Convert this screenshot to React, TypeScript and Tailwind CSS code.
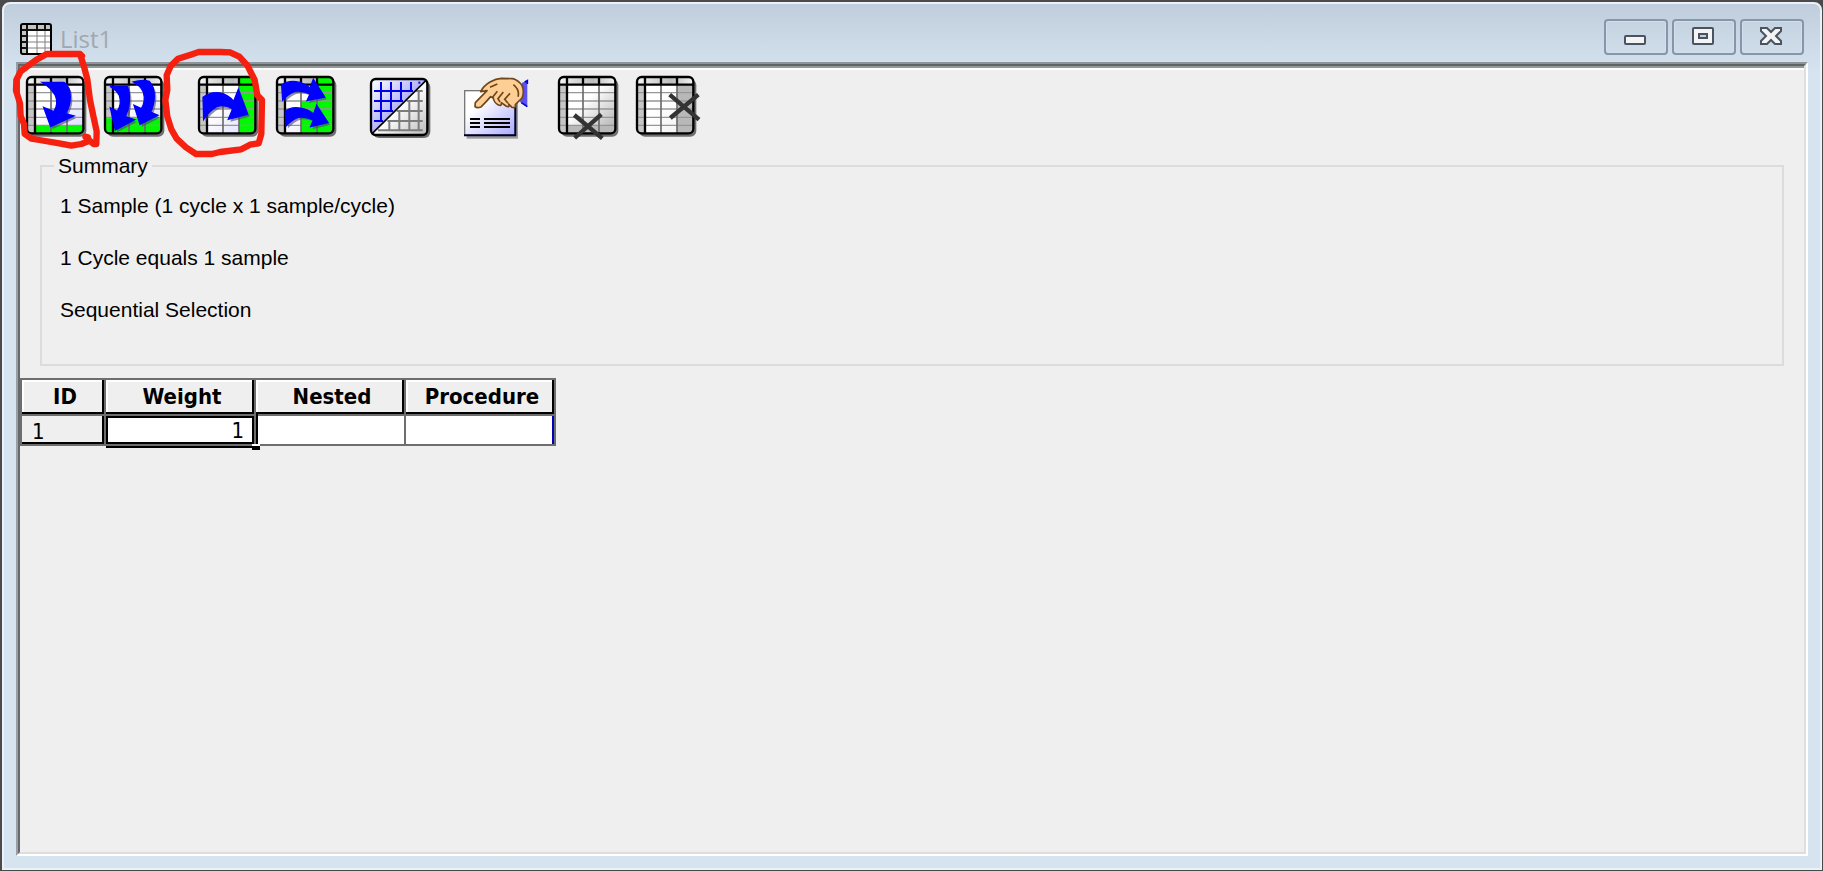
/**
 * Weighted list window: toolbar, summary box and the list grid
 */
import type { ReactNode } from "react";

interface GridIconProps {
  id: string;
  shade?: string;
  green?: string;
  gray?: string;
  arrows?: string[];
  cross?: string;
}

/** Table sheet with optional filled cells, arrows and a cross */
function GridIcon({ id, shade = "#d9d9ff", green, gray, arrows = [], cross }: GridIconProps) {
  return (
    <svg viewBox="0 0 186 186" className="block h-[62px] w-[62px] overflow-visible" aria-hidden="true">
      <defs>
        <linearGradient id={`${id}-body`} x1="0" y1="0" x2="1" y2="1">
          <stop offset="0.45" stopColor="#ffffff" />
          <stop offset="1" stopColor={shade} />
        </linearGradient>
        <linearGradient id={`${id}-head`}>
          <stop offset="0" stopColor="#f4f4f4" />
          <stop offset="0.6" stopColor="#bcbcbc" />
          <stop offset="1" stopColor="#f4f4f4" />
        </linearGradient>
        <clipPath id={`${id}-clip`}>
          <rect x="3" y="3" width="169" height="169" rx="14" />
        </clipPath>
      </defs>
      <rect x="9" y="10" width="172" height="172" rx="18" fill="#444444" opacity="0.75" />
      <g clipPath={`url(#${id}-clip)`}>
        <rect x="3" y="3" width="170" height="170" fill={`url(#${id}-body)`} />
        <rect x="3" y="3" width="170" height="22" fill={`url(#${id}-head)`} />
        <rect x="3" y="25" width="24" height="148" fill="#c6c6c6" />
        {gray && <path d={gray} fill="#b8b8b8" />}
        {green && <path d={green} fill="#00f800" />}
        <path d="M3 50H173M3 75H173M3 99H173M3 124H173M3 148H173" stroke="#969696" strokeWidth="4" />
        <path d="M75 27V173M123 27V173" stroke="#6c6c6c" strokeWidth="5" />
        <path d="M3 26H173M27 3V173M75 3V25M123 3V25" stroke="#000000" strokeWidth="7" />
      </g>
      <rect x="3" y="3" width="169" height="169" rx="14" fill="none" stroke="#000000" strokeWidth="7" />
      {arrows.map((d) => (
        <g key={d}>
          <path d={d} fill="#44446a" opacity="0.6" transform="translate(6 7)" />
          <path d={d} fill="#0000ff" stroke="#0000ff" strokeWidth="4" />
        </g>
      ))}
      {cross && <path d={cross} fill="none" stroke="#333333" strokeWidth="13" />}
    </svg>
  );
}

function TransposeIcon() {
  return (
    <svg viewBox="0 0 186 186" className="block h-[62px] w-[62px] overflow-visible" aria-hidden="true">
      <defs>
        <linearGradient id="tr-blue" x1="0" y1="0" x2="1" y2="1">
          <stop offset="0" stopColor="#ffffff" />
          <stop offset="0.5" stopColor="#b4b4ff" />
        </linearGradient>
        <linearGradient id="tr-gray" x1="0" y1="0" x2="1" y2="1">
          <stop offset="0.5" stopColor="#ffffff" />
          <stop offset="1" stopColor="#bbbbbb" />
        </linearGradient>
      </defs>
      <rect x="9" y="15" width="172" height="171" rx="18" fill="#444444" opacity="0.75" />
      <rect x="3" y="9" width="169" height="168" rx="14" fill="url(#tr-gray)" />
      <path d="M5 172V24Q5 11 18 11H166Z" fill="url(#tr-blue)" />
      <path d="M12 45H129M12 75H99M12 105H69M12 135H39M33 18V138M63 18V108M93 18V78M123 18V48" stroke="#0000e6" strokeWidth="6" />
      <path d="M145 20H151" stroke="#0000e6" strokeWidth="6" />
      <path d="M138 45H158M110 75H158M80 105H158M52 135H158M24 163H158M58 132V163M88 102V163M118 72V163M146 42V163" stroke="#7c7c7c" strokeWidth="6" />
      <path d="M7 172L168 13" stroke="#000000" strokeWidth="5" />
      <rect x="3" y="9" width="169" height="168" rx="14" fill="none" stroke="#000000" strokeWidth="7" />
    </svg>
  );
}

function PropertiesIcon() {
  return (
    <svg viewBox="0 0 186 186" className="block h-[62px] w-[62px] overflow-visible" aria-hidden="true">
      <defs>
        <linearGradient id="pr-card" x1="0" y1="0" x2="1" y2="1">
          <stop offset="0.3" stopColor="#ffffff" />
          <stop offset="1" stopColor="#a8a8ff" />
        </linearGradient>
      </defs>
      <rect x="8" y="50" width="154" height="138" fill="#777777" opacity="0.7" />
      <rect x="2" y="44" width="152" height="134" fill="url(#pr-card)" stroke="#777777" strokeWidth="4" />
      <path d="M0 178H156M154 86V180" stroke="#00002a" strokeWidth="6" />
      <path d="M18 129H48M18 141H48M18 153H48M60 129H138M60 141H138M60 153H138" stroke="#000000" strokeWidth="6" />
      <path d="M174 20L190 14V92L168 78Z" fill="#5b50f0" />
      <path d="M182 18L190 14V24M172 80L190 92" stroke="#0000d0" strokeWidth="5" fill="none" />
      <path
        d="M34 80L69 44Q60 46 50 47Q58 30 78 18Q96 8 112 7L146 8Q162 12 174 28Q182 48 174 66Q164 76 154 86Q156 98 144 94L134 84Q138 96 126 90L112 80Q114 92 102 86Q90 80 88 66L80 62Q68 76 52 92Q40 98 33 92Z"
        fill="#fdcf94"
        stroke="#70461a"
        strokeWidth="5"
        strokeLinejoin="round"
      />
      <path d="M84 66L100 46M108 78L102 68L118 48M132 82L122 70L138 52M78 34L100 24M148 26Q168 42 162 62" fill="none" stroke="#70461a" strokeWidth="5" />
    </svg>
  );
}

/** Toolbar groups, left to right */
const TOOL_GROUPS: { label: string; icon: ReactNode }[][] = [
  [
    {
      label: "Append level",
      icon: (
        <GridIcon
          id="append"
          green="M27 150H173V173H27Z"
          arrows={["M49 19H114Q133 32 133 62Q133 92 118 113L144 120L74 152L53 94L84 107Q98 84 88 58Q74 34 49 19Z"]}
        />
      ),
    },
    {
      label: "Append multiple levels",
      icon: (
        <GridIcon
          id="append-many"
          green="M3 127H173V173H3Z"
          arrows={[
            "M18 31H70Q78 50 76 78Q74 102 64 122L92 131L34 162L19 95L40 106Q54 84 46 58Q36 40 18 31Z",
            "M88 18Q116 10 136 16Q152 34 151 62Q150 88 140 108L162 118L108 145L90 88L112 98Q126 76 118 48Q108 28 88 18Z",
          ]}
        />
      ),
    },
  ],
  [
    {
      label: "Add attribute",
      icon: (
        <GridIcon
          id="attr"
          green="M123 3H173V173H123Z"
          arrows={["M17 130L15 64Q38 46 66 51Q92 57 107 76L121 40L149 115L91 130L104 98Q80 84 56 92Q34 104 17 130Z"]}
        />
      ),
    },
    {
      label: "Add multiple attributes",
      icon: (
        <GridIcon
          id="attr-many"
          green="M123 3H173V173H75V75H123Z"
          arrows={[
            "M20 72L17 27Q34 14 60 17Q84 20 102 36L112 10L146 63L93 74L102 54Q78 42 56 46Q36 54 20 72Z",
            "M30 150L28 106Q44 92 70 96Q94 98 113 114L122 88L156 140L104 152L112 132Q88 120 66 124Q46 132 30 150Z",
          ]}
        />
      ),
    },
  ],
  [{ label: "Combine", icon: <TransposeIcon /> }],
  [{ label: "Properties", icon: <PropertiesIcon /> }],
  [
    {
      label: "Delete level",
      icon: <GridIcon id="del-row" shade="#aaaaaa" gray="M27 150H173V173H27Z" cross="M49 117L133 187M130 115L50 186" />,
    },
    {
      label: "Delete attribute",
      icon: <GridIcon id="del-col" shade="#eeeeee" gray="M123 25H173V173H123Z" cross="M101 56L189 131M187 56L103 126" />,
    },
  ],
];

function SheetIcon() {
  return (
    <svg viewBox="0 0 32 32" className="h-8 w-8 shrink-0" aria-hidden="true">
      <rect x="1" y="1" width="30" height="30" rx="2" fill="#ffffff" />
      <path d="M2 2H30V7H2ZM2 7H7V30H2Z" fill="#c4c4c4" />
      <path d="M7 13H31M7 19H31M7 25H31M17 7V31M25 7V31" stroke="#808080" strokeWidth="1" />
      <path d="M1 7H31M7 1V31M17 1V7M25 1V7M1 13H7M1 19H7M1 25H7" stroke="#111111" strokeWidth="2" />
      <rect x="1" y="1" width="30" height="30" rx="2" fill="none" stroke="#000000" strokeWidth="2" />
    </svg>
  );
}

const WINDOW_BUTTONS: { label: string; icon: ReactNode }[] = [
  {
    label: "Minimize",
    icon: <rect x="19" y="15" width="20" height="8" rx="1" fill="#f4f4f4" stroke="#4b5260" strokeWidth="2" />,
  },
  {
    label: "Restore",
    icon: (
      <g fill="#f4f4f4" stroke="#4b5260" strokeWidth="2">
        <rect x="19" y="7" width="20" height="16" rx="1" />
        <rect x="25" y="13" width="8" height="4" fill="#c3d0e0" />
      </g>
    ),
  },
  {
    label: "Close",
    icon: (
      <path
        d="M19 7H25L29 11L33 7H39V10L34 15L39 20V23H33L29 19L25 23H19V20L24 15L19 10Z"
        fill="#f4f4f4"
        stroke="#4b5260"
        strokeWidth="2"
      />
    ),
  },
];

/** Hand-drawn marks around the two single-item buttons */
function Markup() {
  return (
    <svg viewBox="0 0 1080 510" className="pointer-events-none absolute top-0 left-0 h-[170px] w-[360px]" aria-hidden="true">
      <g fill="none" stroke="#f5200f" strokeWidth="19" strokeLinejoin="round" strokeLinecap="round">
        <path d="M246 168L240 162H140L108 180L62 214L49 240L48 272L60 310L62 348L72 372L74 402L94 416L118 420L178 430L214 437L244 432L264 424V412L256 410L280 432H289L290 394L280 348L270 300L262 238L252 200L242 168" />
        <path d="M690 157L662 156H596L572 164L534 176L512 198L500 226L502 270L496 300L502 350L514 388L530 416L558 442L588 462H636L660 456L724 448L750 434L776 430L784 402L786 300L772 286L764 240L742 196L718 170L690 157" />
      </g>
    </svg>
  );
}

/** Raised header cell: light top-left, black bottom-right */
const HEAD_CELL =
  "h-9 border-r-2 border-b-2 border-[#6e6e6e] bg-[#efefef] p-0 pl-1 text-center font-bold shadow-[inset_-2px_-2px_0_#000,inset_2px_2px_0_#fff]";

export default function App() {
  return (
    <div className="relative flex min-h-screen flex-col bg-[#4a4a4a] pt-[2px] pr-px pb-px pl-[2px] font-['Liberation_Sans',Arial,sans-serif] text-black">
      <div className="flex flex-1 flex-col rounded-t-lg border-2 border-[#eaf1f8] bg-[#d6e4f0] bg-linear-to-b from-[#c0cddc] to-[#d6e4f0] to-[70px] px-3 pb-3">
        {/* Title bar */}
        <header className="flex h-[58px] items-center justify-between pt-2 pr-1 pl-1">
          <div className="flex items-center gap-2 pt-1">
            <SheetIcon />
            <h1 className="font-['Open_Sans','Noto_Sans',sans-serif] text-[24px] leading-8 text-[#a2a7af]">List1</h1>
          </div>
          <div className="flex gap-1">
            {WINDOW_BUTTONS.map((b) => (
              <button
                key={b.label}
                type="button"
                aria-label={b.label}
                className="h-9 w-16 rounded-[4px] border-2 border-[#8595aa] shadow-[inset_0_0_0_1px_#d3dfec]"
              >
                <svg viewBox="0 0 60 32" className="block h-8 w-[60px]">
                  {b.icon}
                </svg>
              </button>
            ))}
          </div>
        </header>

        <main className="flex flex-1 flex-col border-t-2 border-r-2 border-b-2 border-l-2 border-t-[#8e9499] border-r-white border-b-white border-l-[#9a9fa5]">
          <div className="flex flex-1 flex-col border-t-2 border-r-2 border-b-2 border-l-2 border-t-[#5f6562] border-r-[#dddfe2] border-b-[#dddddd] border-l-[#66686c] bg-[#efefef]">
            <div className="h-1 border-t-2 border-b-2 border-t-[#959a98] border-b-white" />

            {/* Toolbar */}
            <div className="flex gap-8 px-[6px] pt-[6px]" role="toolbar" aria-label="List tools">
              {TOOL_GROUPS.map((group, i) => (
                <div key={i} className="flex gap-4">
                  {group.map((tool) => (
                    <button key={tool.label} type="button" aria-label={tool.label}>
                      {tool.icon}
                    </button>
                  ))}
                </div>
              ))}
            </div>

            {/* Summary */}
            <fieldset className="mx-5 mt-4 h-[212px] border-2 border-[#dcdcdc] pl-[18px] text-[21px] leading-6">
              <legend className="-ml-[6px] px-1">Summary</legend>
              <div className="flex flex-col gap-7 pt-4">
                <p>1 Sample (1 cycle x 1 sample/cycle)</p>
                <p>1 Cycle equals 1 sample</p>
                <p>Sequential Selection</p>
              </div>
            </fieldset>

            {/* List grid */}
            <table className="mt-3 w-[536px] table-fixed border-separate border-spacing-0 border-t-2 border-l-2 border-[#6e6e6e] font-['DejaVu_Sans_Condensed','DejaVu_Sans',sans-serif] text-[22px] leading-6">
              <colgroup>
                <col className="w-[84px]" />
                <col className="w-[150px]" />
                <col className="w-[150px]" />
                <col />
              </colgroup>
              <thead>
                <tr>
                  <th scope="col" className={HEAD_CELL}>ID</th>
                  <th scope="col" className={HEAD_CELL}>Weight</th>
                  <th scope="col" className={HEAD_CELL}>Nested</th>
                  <th scope="col" className={HEAD_CELL}>Procedure</th>
                </tr>
              </thead>
              <tbody>
                <tr>
                  <th
                    scope="row"
                    className="h-[30px] border-r-2 border-b-2 border-[#6e6e6e] bg-[#efefef] pt-1 pb-0 pl-[10px] text-left font-normal shadow-[inset_-2px_-2px_0_#000]"
                  >
                    1
                  </th>
                  <td className="relative border-r-2 border-b-2 border-[#6e6e6e] bg-white p-0 shadow-[0_2px_0_#000]">
                    <input
                      aria-label="Weight"
                      defaultValue="1"
                      className="block h-7 w-full border-2 border-black bg-white pr-2 text-right outline-none"
                    />
                    <span className="absolute -right-1 -bottom-1 h-[34px] w-[2px] bg-black" />
                    <span className="absolute -right-[6px] -bottom-[6px] h-[6px] w-2 border-t-2 border-white bg-black" />
                  </td>
                  <td className="border-r-2 border-b-2 border-[#6e6e6e] bg-white p-0" />
                  <td className="border-r-2 border-b-2 border-[#6e6e6e] bg-white p-0 shadow-[inset_-2px_0_0_#0000b4]" />
                </tr>
              </tbody>
            </table>
          </div>
        </main>
      </div>
      <Markup />
    </div>
  );
}
